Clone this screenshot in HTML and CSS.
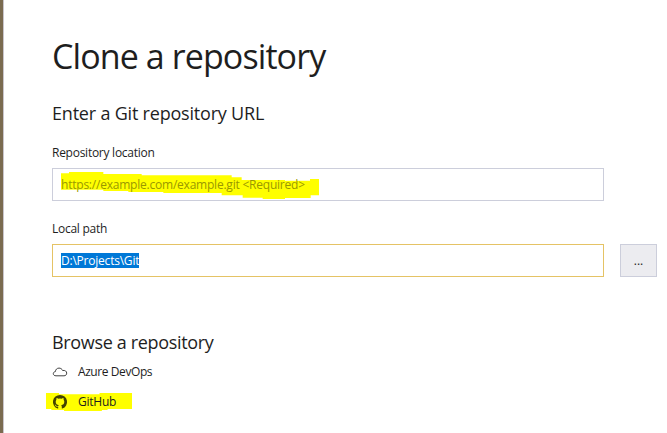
FILE: index.html
```html
<!DOCTYPE html>
<html lang="en">
<head>
<meta charset="utf-8">
<title>Clone a repository</title>
<link rel="stylesheet" href="styles.css">
</head>
<body>
<main class="dialog">
  <h1 class="title">Clone a repository</h1>
  <h2 class="subtitle">Enter a Git repository URL</h2>
  <div class="label">Repository location</div>
  <div class="field">
    <svg class="marker" width="258" height="27" viewBox="0 0 774 81" preserveAspectRatio="none"><path d="M0 4H24V0H127V6H242V10H512V16H542V24H672V26H747V21H774V70H749V78H672V81H605V77H545V70H482V63H307V60H202V57H127V53H0Z"/></svg>
    <span class="placeholder">https://example.com/example.git &lt;Required&gt;</span>
  </div>
  <div class="label">Local path</div>
  <div class="row">
    <div class="field focused"><span class="selected">D:\Projects\Git</span></div>
    <button class="browse">...</button>
  </div>
  <h2 class="subtitle browse-title">Browse a repository</h2>
  <div class="provider">
    <svg width="16" height="16" viewBox="0 0 16 16"><path class="cloud" d="M4 11.8C2.4 11.8 1.3 11 1.3 9.7C1.3 8.5 2.2 7.7 3.4 7.6C3.5 5.5 5 4.1 7 4.1C8.7 4.1 10 5 10.6 6.5C13 6 14.7 7.3 14.7 9.1C14.7 10.8 13.6 11.8 12 11.8Z"/></svg>
    <span class="azure">Azure DevOps</span>
  </div>
  <div class="provider github">
    <svg class="marker" width="86" height="18" viewBox="0 0 257 54" preserveAspectRatio="none"><path d="M0 0H39V4H160V0H257V48H184V51H167V54H54V51H16V48H0Z"/></svg>
    <svg class="logo" width="16" height="16" viewBox="0 0 16 16"><path class="octocat" d="M8 1a7 7 0 0 0-2.4 13.6c.4.1.6-.2.6-.4v-1.3c-1.8.3-2.4-.5-2.7-1.1-.2-.4-.5-.7-.8-.9.9-.2 1.3.4 1.6.8.5.8 1.3.8 1.9.6.1-.5.3-.9.6-1.1C5 11 3.700 10.200 3.700 7.800c0-.8.3-1.500.7-2-.1-.5-.1-1.200.2-1.900.7 0 1.300.400 1.800.8a6.500 6.500 0 0 1 3.200 0c.5-.4 1.100-.8 1.800-.8.3.7.3 1.400.2 1.900.4.5.7 1.200.7 2 0 2.400-1.300 3.200-3.100 3.400.4.4.6.9.6 1.600v1.400c0 .2.200.5.6.4A7 7 0 0 0 8 1Z"/></svg>
    <span class="github-name">GitHub</span>
  </div>
</main>
</body>
</html>
```
FILE: styles.css
```css
* { box-sizing: border-box; }
body {
  margin: 0;
  height: 433px;
  overflow: hidden;
  background: #fff;
  color: #1e1e1e;
  font: 12px/16px "Open Sans", "Noto Sans", sans-serif;
}
.dialog {
  height: 433px;
  padding: 32px 10px 0 49px;
  border-left: 3px solid #7a6b50;
  box-shadow: inset 1px 0 #c9c5cc;
}
h1, h2 { margin: 0; font-weight: 400; white-space: nowrap; }
.title { font-size: 34px; line-height: 48px; letter-spacing: -0.9px; }
.subtitle { margin-top: 21px; font-size: 18px; line-height: 24px; letter-spacing: -0.2px; }
.label { margin: 20px 0 7px; letter-spacing: -0.26px; }
.field {
  position: relative;
  display: flex;
  align-items: center;
  width: 552px;
  height: 33px;
  padding: 0 8px;
  border: 1px solid #cccedb;
  letter-spacing: -0.22px;
}
.marker { position: absolute; left: 8px; top: 3px; fill: #ff0; }
.placeholder { position: relative; color: #9a9800; white-space: pre; }
.row { display: flex; gap: 16px; }
.focused { border-color: #e5c365; }
.selected { background: #0078d7; color: #fff; line-height: 15px; }
.browse {
  width: 37px;
  height: 33px;
  padding: 0;
  border: 1px solid #cccedb;
  background: #ececf0;
  color: #1e1e1e;
  font: inherit;
}
.browse-title { margin-top: 53px; letter-spacing: -0.34px; }
.provider { position: relative; display: flex; gap: 10px; height: 16px; margin-top: 10px; }
.github { margin-top: 14px; }
.github .marker { left: -6px; top: -1px; }
.logo { position: relative; }
.azure { letter-spacing: -0.42px; }
.github-name { position: relative; letter-spacing: -0.25px; }
.cloud { fill: none; stroke: #424242; stroke-width: 1; }
.octocat { fill: #424200; }
```
